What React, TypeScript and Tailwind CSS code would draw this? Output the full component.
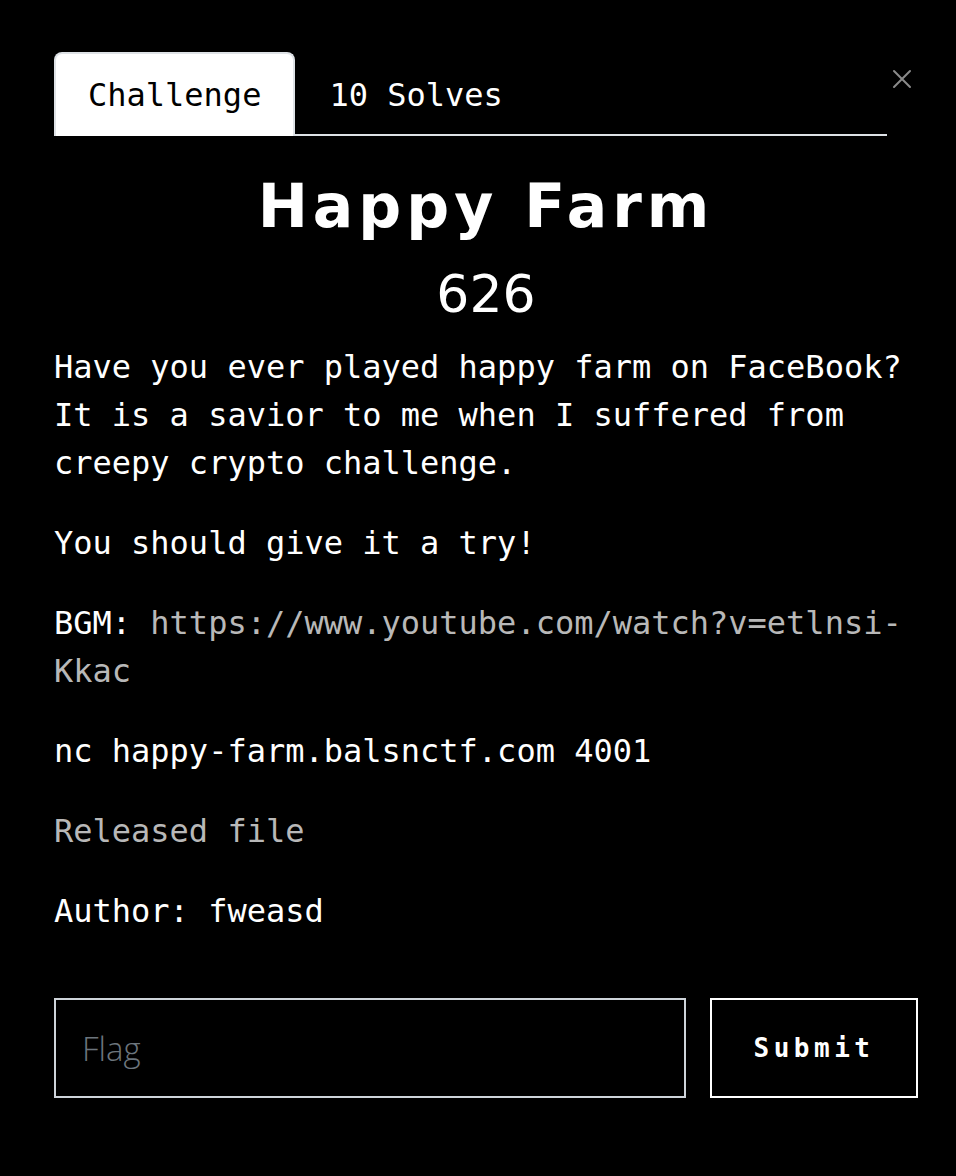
import React from "react";

const mono = "font-['DejaVu_Sans_Mono','Liberation_Mono',monospace]";

export default function App() {
  return (
    <div className="relative min-h-[1176px] w-[956px] bg-black text-white">
      <button
        aria-label="Close"
        className="absolute left-[891px] top-[68px] h-[22px] w-[22px] text-[#8a8a8a]"
      >
        <svg viewBox="0 0 22 22" width="22" height="22" fill="none" stroke="currentColor" strokeWidth="2" strokeLinecap="round">
          <path d="M3 3 L19 19 M19 3 L3 19" />
        </svg>
      </button>

      <div className="pl-[54px] pr-[38px] pt-[52px]">
        <div className={`mr-[31px] flex border-b-2 border-[#dee2e6] ${mono}`}>
          <div className="-mb-[2px] rounded-t-lg border-2 border-b-0 border-[#dee2e6] bg-white px-[32px] pt-[17px] pb-[15px] text-[32px] leading-[48px] text-black">
            Challenge
          </div>
          <div className="border-2 border-transparent px-[32px] pt-[17px] pb-[13px] text-[32px] leading-[48px] text-white">
            10 Solves
          </div>
        </div>

        <h1 className="mt-[34px] text-center font-['DejaVu_Sans',sans-serif] text-[60px] font-bold leading-[72px] tracking-[5px] text-white">
          Happy Farm
        </h1>
        <div className="mt-[21px] text-center font-['DejaVu_Sans',sans-serif] text-[52px] font-normal leading-[62px] text-white">
          626
        </div>

        <div className={`mt-[18px] text-[32px] leading-[48px] ${mono}`}>
          <p className="mb-[32px]">
            Have you ever played happy farm on FaceBook? It is a savior to me when I suffered from creepy crypto challenge.
          </p>
          <p className="mb-[32px]">You should give it a try!</p>
          <p className="mb-[32px]">
            BGM:{" "}
            <a className="text-[#b8b8b8]" href="#">
              https://www.youtube.com/watch?v=etlnsi-<wbr />Kkac
            </a>
          </p>
          <p className="mb-[32px]">nc happy-farm.balsnctf.com 4001</p>
          <p className="mb-[32px]">
            <a className="text-[#b8b8b8]" href="#">
              Released file
            </a>
          </p>
          <p>Author: fweasd</p>
        </div>

        <div className="mt-[63px] flex gap-[24px]">
          <input
            placeholder="Flag"
            className="h-[100px] w-[632px] border-2 border-[#ced4da] bg-black px-[26px] font-['Open_Sans',sans-serif] text-[33px] font-light text-white outline-none placeholder:text-[#6c757d]"
          />
          <button
            className={`h-[100px] w-[208px] border-2 border-white bg-black text-[26px] font-bold tracking-[4.5px] text-white ${mono}`}
          >
            Submit
          </button>
        </div>
      </div>
    </div>
  );
}
